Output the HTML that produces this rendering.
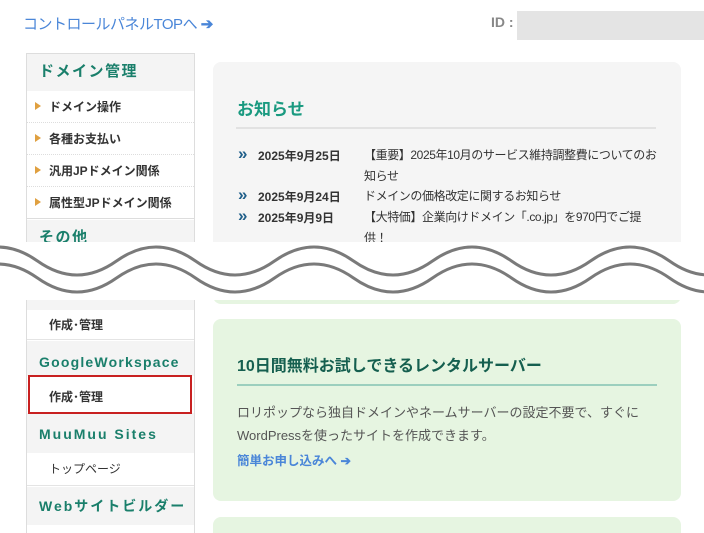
<!DOCTYPE html>
<html><head><meta charset="utf-8"><style>
*{margin:0;padding:0;box-sizing:border-box}
html,body{width:704px;height:533px;overflow:hidden}
body{background:#fff;position:relative;font-family:"Liberation Sans","Noto Sans CJK JP",sans-serif;color:#333}
.a{position:absolute;white-space:nowrap}
.side{position:absolute;left:26px;width:169px;border-left:1px solid #ddd;border-right:1px solid #ddd;overflow:hidden}
.hd{position:absolute;left:0;width:167px;background:#f4f4f4;color:#1a7f6b;font-size:15px;letter-spacing:1.5px;padding-left:12px;font-weight:bold;white-space:nowrap;overflow:hidden}
.it{position:absolute;left:0;width:167px;background:#fff;font-size:12px;font-weight:bold;color:#333;padding-left:22px;border-bottom:1px dotted #ddd}
.tri{position:absolute;left:8px;width:0;height:0;border-left:6px solid #e0a040;border-top:4px solid transparent;border-bottom:4px solid transparent}
.nd{font-size:12px;color:#333;font-weight:bold}
.nt{font-size:12px;color:#333;letter-spacing:-0.4px}
.ch{color:#1f5f8a;font-weight:bold;font-size:17px;line-height:14px}
</style></head><body>
<div class="a" style="left:23px;top:13px;font-size:15px;color:#4a86d8;letter-spacing:-0.5px">コントロールパネルTOPへ <b>➔</b></div>
<div class="a" style="left:491px;top:14px;font-size:14px;font-weight:bold;color:#888">ID :</div>
<div class="a" style="left:517px;top:11px;width:187px;height:29px;background:#e4e4e4"></div>

<div class="side" style="top:53px;height:190px;border-top:1px solid #ddd">
 <div class="hd" style="top:0;height:37px;line-height:36px">ドメイン管理</div>
 <div class="it" style="top:37px;height:32px;line-height:32px"><span class="tri" style="top:11px"></span>ドメイン操作</div>
 <div class="it" style="top:69px;height:32px;line-height:32px"><span class="tri" style="top:11px"></span>各種お支払い</div>
 <div class="it" style="top:101px;height:32px;line-height:32px"><span class="tri" style="top:11px"></span>汎用JPドメイン関係</div>
 <div class="it" style="top:133px;height:32px;line-height:32px;border-bottom:1px solid #ddd"><span class="tri" style="top:11px"></span>属性型JPドメイン関係</div>
 <div class="hd" style="top:166px;height:30px;line-height:36px">その他</div>
</div>

<div class="a" style="left:213px;top:62px;width:468px;height:190px;background:#f5f5f5;border-radius:8px"></div>
<div class="a" style="left:237px;top:95px;font-size:17px;font-weight:bold;color:#1a9a80">お知らせ</div>
<div class="a" style="left:236px;top:127px;width:420px;height:2px;background:#e2e2e2"></div>
<div class="a ch" style="left:238px;top:147px">»</div><div class="a nd" style="left:258px;top:147px">2025年9月25日</div>
<div class="a nt" style="left:364px;top:145px;line-height:21px;white-space:normal;width:300px">【重要】2025年10月のサービス維持調整費についてのお知らせ</div>
<div class="a ch" style="left:238px;top:188px">»</div><div class="a nd" style="left:258px;top:188px">2025年9月24日</div>
<div class="a nt" style="left:364px;top:187px">ドメインの価格改定に関するお知らせ</div>
<div class="a ch" style="left:238px;top:209px">»</div><div class="a nd" style="left:258px;top:209px">2025年9月9日</div>
<div class="a nt" style="left:364px;top:207px;line-height:21px;white-space:normal;width:300px">【大特価】企業向けドメイン「.co.jp」を970円でご提供！</div>

<div class="a" style="left:213px;top:280px;width:468px;height:24px;background:#e6f5e1;border-radius:0 0 8px 8px"></div>
<div class="a" style="left:0;top:242px;width:704px;height:58px;background:#fff"></div>
<svg class="a" style="left:0;top:0" width="704" height="533">
<path d="M-41.5 261 Q-2 233 37.5 261 T116.5 261 T195.5 261 T274.5 261 T353.5 261 T432.5 261 T511.5 261 T590.5 261 T669.5 261 T748.5 261" fill="none" stroke="#7a7a7a" stroke-width="3"/>
<path d="M-41.5 278 Q-2 250 37.5 278 T116.5 278 T195.5 278 T274.5 278 T353.5 278 T432.5 278 T511.5 278 T590.5 278 T669.5 278 T748.5 278" fill="none" stroke="#7a7a7a" stroke-width="3"/>
</svg>

<div class="side" style="top:300px;height:233px">
 <div class="hd" style="top:0;height:10px"></div>
 <div class="it" style="top:10px;height:30px;line-height:30px;border-bottom:1px solid #e4e4e4">作成･管理</div>
 <div class="hd" style="top:41px;height:35px;line-height:42px;font-size:14px;letter-spacing:1.2px">GoogleWorkspace</div>
 <div class="it" style="top:76px;height:37px;line-height:43px;border:none">作成･管理</div>
 <div class="hd" style="top:113px;height:40px;line-height:42px;font-size:14px;letter-spacing:2px">MuuMuu Sites</div>
 <div class="it" style="top:153px;height:33px;line-height:33px;font-weight:normal;border-bottom:1px solid #e4e4e4">トップページ</div>
 <div class="hd" style="top:187px;height:38px;line-height:38px;font-size:14px;letter-spacing:2px">Webサイトビルダー</div>
</div>
<div class="a" style="left:28px;top:375px;width:164px;height:39px;border:2px solid #c82020"></div>

<div class="a" style="left:213px;top:319px;width:468px;height:182px;background:#e6f5e1;border-radius:8px"></div>
<div class="a" style="left:237px;top:352px;font-size:16px;font-weight:bold;color:#155f4f">10日間無料お試しできるレンタルサーバー</div>
<div class="a" style="left:237px;top:384px;width:420px;height:2px;background:#9ccfbe"></div>
<div class="a" style="left:237px;top:401px;font-size:13px;color:#555;line-height:23px;white-space:normal;width:420px">ロリポップなら独自ドメインやネームサーバーの設定不要で、すぐにWordPressを使ったサイトを作成できます。</div>
<div class="a" style="left:237px;top:450px;font-size:12.5px;color:#4a86d8;font-weight:bold">簡単お申し込みへ ➔</div>
<div class="a" style="left:213px;top:517px;width:468px;height:30px;background:#e6f5e1;border-radius:8px"></div>
</body></html>
